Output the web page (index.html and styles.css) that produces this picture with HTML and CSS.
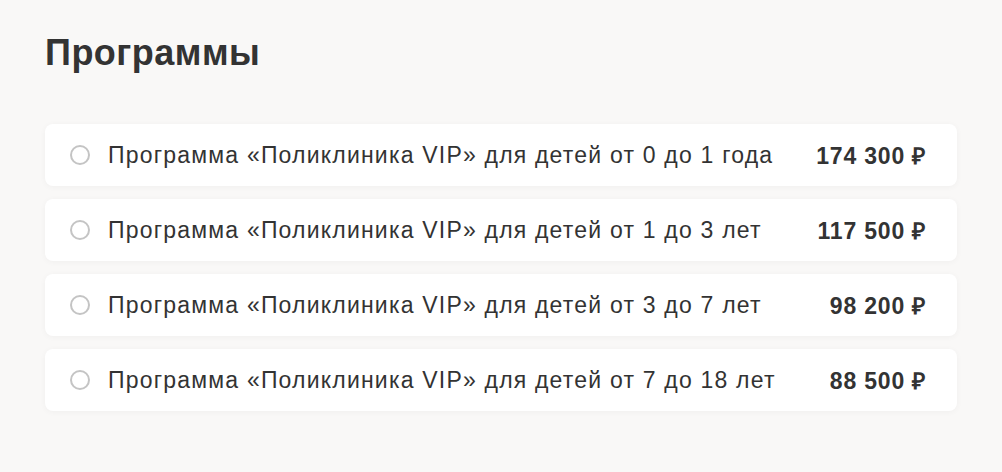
FILE: index.html
```html
<html lang="ru">
<head>
    <title>Программы</title>
    <link rel="stylesheet" href="styles.css">
</head>
<body>
<div class="page">
    <h1 class="title">Программы</h1>
    <div class="program-list">
        <label class="program">
            <span class="radio"></span>
            <span class="program-name">Программа «Поликлиника VIP» для детей от 0 до 1 года</span>
            <span class="program-price">174 300 ₽</span>
        </label>
        <label class="program">
            <span class="radio"></span>
            <span class="program-name">Программа «Поликлиника VIP» для детей от 1 до 3 лет</span>
            <span class="program-price">117 500 ₽</span>
        </label>
        <label class="program">
            <span class="radio"></span>
            <span class="program-name">Программа «Поликлиника VIP» для детей от 3 до 7 лет</span>
            <span class="program-price">98 200 ₽</span>
        </label>
        <label class="program">
            <span class="radio"></span>
            <span class="program-name">Программа «Поликлиника VIP» для детей от 7 до 18 лет</span>
            <span class="program-price">88 500 ₽</span>
        </label>
    </div>
</div>
</body>
</html>
```

FILE: styles.css
```css
body {
    margin: 0;
    background-color: #f9f8f7;
    font-family: "Liberation Sans", Arial, sans-serif;
    color: #333333;
}

.page {
    padding: 31px 45px 0 45px;
    width: 912px;
}

.title {
    font-size: 36px;
    font-weight: bold;
    letter-spacing: 0.5px;
    line-height: 44px;
    margin: 0 0 49px 0;
    color: #333333;
}

.program-list {
    display: flex;
    flex-direction: column;
    gap: 13px;
}

.program {
    display: flex;
    align-items: center;
    height: 62px;
    padding: 0 31px 0 25px;
    background-color: #ffffff;
    border-radius: 8px;
    box-shadow: 0 1px 6px rgba(0, 0, 0, 0.04);
}

.radio {
    width: 16px;
    height: 16px;
    border: 2px solid #c4c4c4;
    border-radius: 50%;
    flex-shrink: 0;
    margin-right: 18px;
}

.program-name {
    flex: 1;
    font-size: 23px;
    letter-spacing: 1.2px;
}

.program-price {
    font-size: 23px;
    font-weight: bold;
    letter-spacing: 0.8px;
}
```
